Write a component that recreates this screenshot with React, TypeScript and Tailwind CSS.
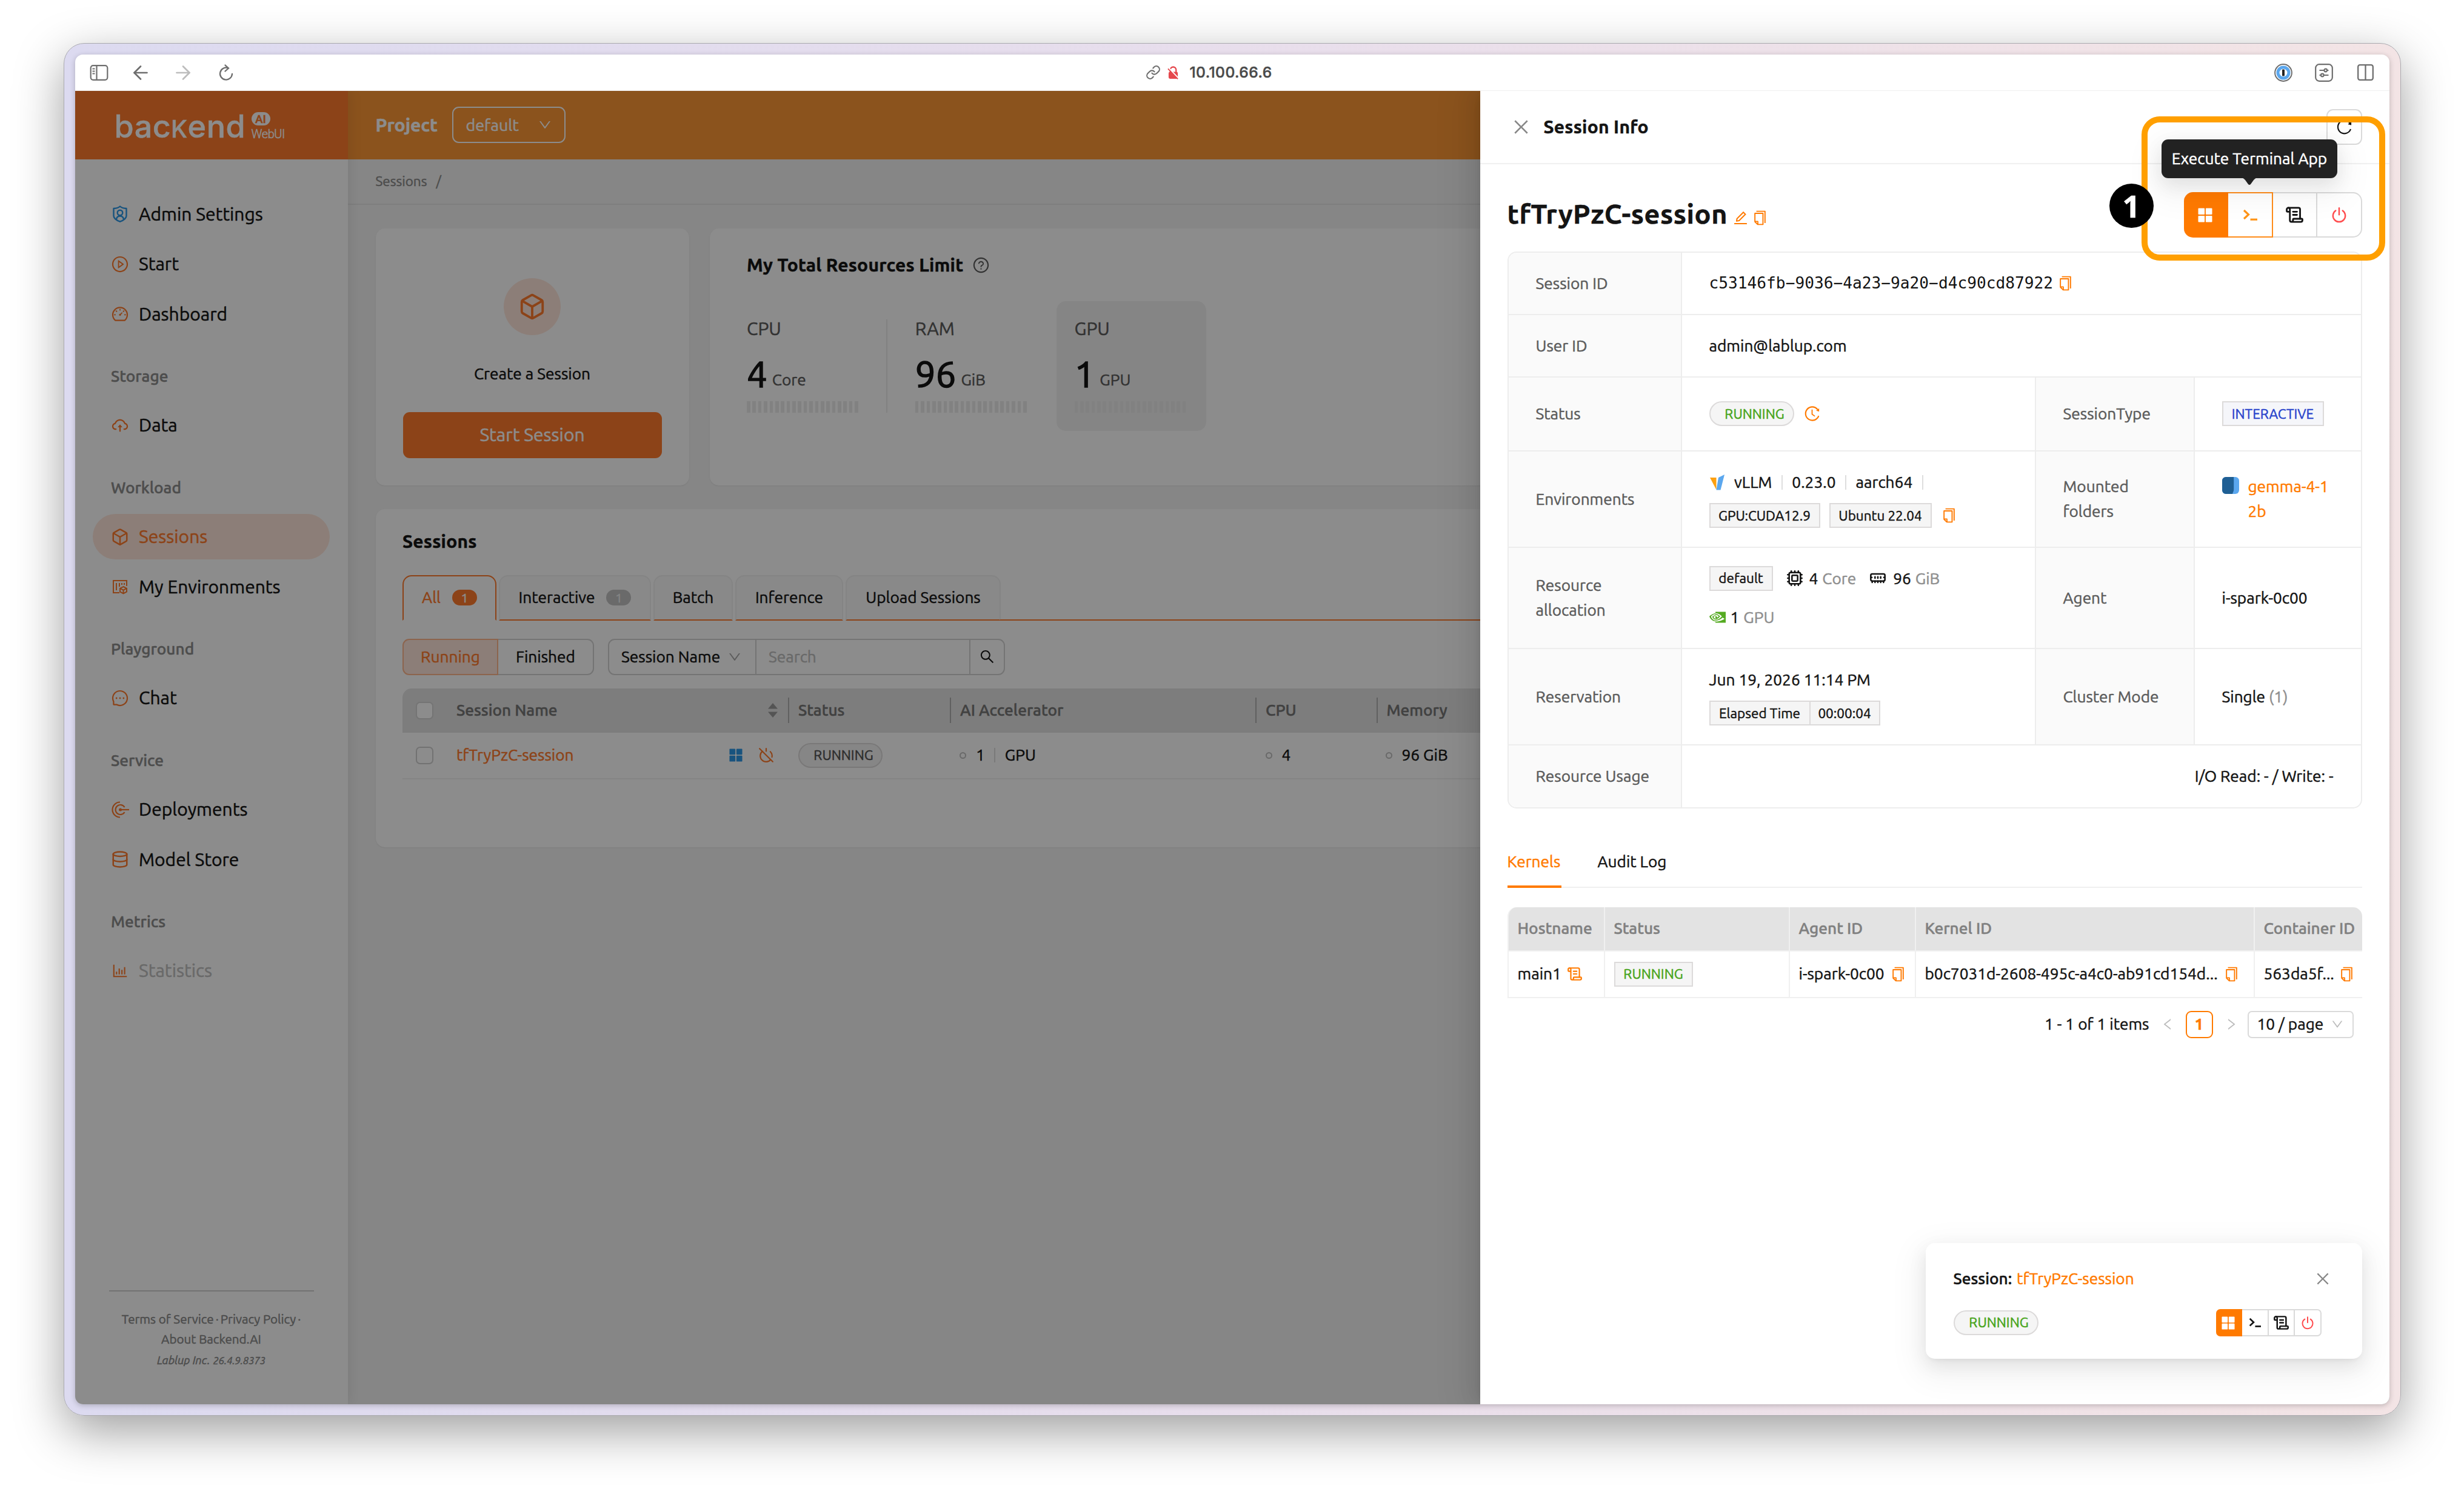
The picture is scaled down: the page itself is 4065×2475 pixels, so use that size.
import type { ReactNode } from "react"
import clsx from "clsx"
import {
  AiOutlineBarChart,
  AiOutlineClose,
  AiOutlineCloudUpload,
  AiOutlineCopy,
  AiOutlineDashboard,
  AiOutlineDown,
  AiOutlineEdit,
  AiOutlineHistory,
  AiOutlineLeft,
  AiOutlineMessage,
  AiOutlinePlayCircle,
  AiOutlineQuestionCircle,
  AiOutlineReload,
  AiOutlineRight,
  AiOutlineSearch,
} from "react-icons/ai"
import { SiNvidia } from "react-icons/si"
import { ArrowLeft, ArrowRight, Box, Cpu, Database, Link, MemoryStick, PowerOff, ScrollText } from "lucide-react"

/* ---------- icons ---------- */

function AppsIcon({ className }: { className?: string }) {
  return (
    <svg viewBox="0 0 24 24" className={className} fill="currentColor">
      <rect x="0.5" y="0.5" width="10.6" height="10.6" rx="1" />
      <rect x="12.9" y="0.5" width="10.6" height="10.6" rx="1" />
      <rect x="0.5" y="12.9" width="10.6" height="10.6" rx="1" />
      <rect x="12.9" y="12.9" width="10.6" height="10.6" rx="1" />
    </svg>
  )
}

function PowerIcon({ className }: { className?: string }) {
  return (
    <svg viewBox="0 0 24 26" className={className} fill="none" stroke="currentColor" strokeWidth="2.400" strokeLinecap="round">
      <path d="M6.300 5.400a10.200 10.200 0 1 0 11.400 0" />
      <path d="M12 1.200v11" />
    </svg>
  )
}

function TerminalIcon({ className }: { className?: string }) {
  return (
    <svg viewBox="0 0 24 20" className={className} fill="none" stroke="currentColor" strokeWidth="3.2">
      <path d="M2 2l7.5 7L2 16" />
      <path d="M12.5 17.2H24" />
    </svg>
  )
}

function ShieldUserIcon({ className }: { className?: string }) {
  return (
    <svg viewBox="0 0 24 28" className={className} fill="none" stroke="currentColor" strokeWidth="2.4" strokeLinejoin="round">
      <path d="M12 1.5C14 3.4 18 4.8 22.5 5v12c0 4-4.500 7.500-10.500 9.700C6 24.500 1.500 21 1.500 17V5C6 4.800 10 3.400 12 1.500z" />
      <circle cx="12" cy="12" r="4.300" />
      <path d="M6 23c.5-4 3-5.500 6-5.500s5.500 1.500 6 5.500" />
    </svg>
  )
}

function EnvironmentIcon({ className }: { className?: string }) {
  return (
    <svg viewBox="0 0 26 26" className={className} fill="none" stroke="currentColor" strokeWidth="2">
      <path d="M12 23H2V3h22v9" />
      <path d="M7 7v12M12 7v6M16 7v3M20 7v3" />
      <path d="M18.500 13l5.500 2.800v5.700l-5.500 2.800-5.500-2.800v-5.700zM13 15.800l5.500 2.800 5.500-2.800M18.500 18.600v5.700" />
    </svg>
  )
}

function DeployIcon({ className }: { className?: string }) {
  return (
    <svg viewBox="0 0 30 28" className={className} fill="none" stroke="currentColor" strokeWidth="2.200">
      <path d="M15 1.500a12.500 12.500 0 1 0 0 25" />
      <path d="M22.500 10a8 8 0 1 0 0 8" />
      <path d="M15 14h15" />
      <circle cx="15.500" cy="14" r="2.500" fill="currentColor" stroke="none" />
    </svg>
  )
}

function VllmIcon({ className }: { className?: string }) {
  return (
    <svg viewBox="0 0 24 26" className={className}>
      <path d="M0 5h10.500v20z" fill="#fda010" />
      <path d="M10.500 25.500L14 5l10-5-6.500 25.500z" fill="#5ba7ee" />
    </svg>
  )
}

function SidebarToggleIcon({ className }: { className?: string }) {
  return (
    <svg viewBox="0 0 30 26" className={className} fill="none" stroke="currentColor" strokeWidth="2.200">
      <rect x="1.200" y="1.200" width="27.600" height="23.600" rx="4" />
      <path d="M11 1v24M4 6.500h4M4 10.500h4M4 14.500h4" />
    </svg>
  )
}

function BrowserReloadIcon({ className }: { className?: string }) {
  return (
    <svg viewBox="0 0 24 28" className={className} fill="none" stroke="currentColor" strokeWidth="2.300" strokeLinecap="round">
      <path d="M22 16a10 10 0 1 1-7-10" />
      <path d="M10.500 1.500l5.500 5-5.500 5" />
    </svg>
  )
}

function LockOffIcon({ className }: { className?: string }) {
  return (
    <svg viewBox="0 0 20 24" className={className}>
      <path d="M5 11V7a5 5 0 0 1 10 0v4" fill="none" stroke="#e5484d" strokeWidth="2.400" />
      <rect x="2" y="10.500" width="16" height="12" rx="2.500" fill="#e5484d" />
      <path d="M1 3l18 19" stroke="#fff" strokeWidth="3" />
      <path d="M1 5l17 18" stroke="#e5484d" strokeWidth="2" />
    </svg>
  )
}

function SettingsIcon({ className }: { className?: string }) {
  return (
    <svg viewBox="0 0 30 30" className={className} fill="none" stroke="currentColor" strokeWidth="2.200">
      <rect x="1.200" y="1.200" width="27.600" height="27.600" rx="6" />
      <path d="M7.500 11h8M20 11h2.500M7.500 19h2.500M15 19h7.500" />
      <circle cx="17.700" cy="11" r="2.300" />
      <circle cx="12.300" cy="19" r="2.300" />
    </svg>
  )
}

function PasswordIcon({ className }: { className?: string }) {
  return (
    <svg viewBox="0 0 30 30" className={className}>
      <circle cx="15" cy="15" r="13.900" fill="#fff" stroke="#6e6e6e" strokeWidth="2" />
      <circle cx="15" cy="15" r="9" fill="#fff" stroke="#5ba7ee" strokeWidth="5" />
      <rect x="13" y="9.500" width="4" height="11" rx="1" fill="#222" />
    </svg>
  )
}

function SplitIcon({ className }: { className?: string }) {
  return (
    <svg viewBox="0 0 27 27" className={className} fill="none" stroke="currentColor" strokeWidth="2.300">
      <rect x="1.200" y="1.200" width="24.600" height="24.600" rx="3" />
      <path d="M13.500 1v25" />
    </svg>
  )
}

function VolumeIcon({ className }: { className?: string }) {
  return (
    <svg viewBox="0 0 27 27" className={className}>
      <rect width="27" height="27" rx="6" fill="#5ba7ee" />
      <path d="M6 0h12.500v20c0 3-2 5-2 7H6a6 6 0 0 1-6-6V6a6 6 0 0 1 6-6z" fill="#1f5f94" />
    </svg>
  )
}

/* ---------- small pieces ---------- */

function Tag({ children, className }: { children: ReactNode; className?: string }) {
  return (
    <span
      className={clsx(
        "flex h-[41px] items-center justify-center border-2 border-[#dcdada] bg-[#f5f5f5] text-[22.500px] leading-none",
        className,
      )}
    >
      {children}
    </span>
  )
}

function RunningTag({ className }: { className?: string }) {
  return (
    <Tag className={clsx("w-[140px] rounded-full border-[#b7e59a] pl-[10px] text-[#49a51d]", className)}>RUNNING</Tag>
  )
}

function CopyIcon({ className }: { className?: string }) {
  return <AiOutlineCopy className={clsx("size-[27px] shrink-0 text-[#ff7a00]", className)} />
}

function Rule() {
  return <span className="h-[24px] w-[2px] shrink-0 bg-[#dedede]" />
}

/* ---------- sidebar ---------- */

const menu = [
  {
    items: [
      { label: "Admin Settings", icon: <ShieldUserIcon className="h-[28px] w-[24px] text-[#2d97e5]" /> },
      { label: "Start", icon: <AiOutlinePlayCircle className="size-[32px]" /> },
      { label: "Dashboard", icon: <AiOutlineDashboard className="size-[32px]" /> },
    ],
  },
  { title: "Storage", items: [{ label: "Data", icon: <AiOutlineCloudUpload className="size-[32px]" /> }] },
  {
    title: "Workload",
    items: [
      { label: "Sessions", icon: <Box className="size-[30px]" />, active: true },
      { label: "My Environments", icon: <EnvironmentIcon className="size-[26px]" /> },
    ],
  },
  { title: "Playground", items: [{ label: "Chat", icon: <AiOutlineMessage className="size-[32px]" /> }] },
  {
    title: "Service",
    items: [
      { label: "Deployments", icon: <DeployIcon className="h-[28px] w-[30px]" /> },
      { label: "Model Store", icon: <Database className="size-[30px]" /> },
    ],
  },
  { title: "Metrics", items: [{ label: "Statistics", icon: <AiOutlineBarChart className="size-[30px]" />, disabled: true }] },
] as { title?: string; items: { label: string; icon: ReactNode; active?: boolean; disabled?: boolean }[] }[]

function Sidebar() {
  return (
    <aside className="relative flex w-[450px] shrink-0 flex-col bg-white shadow-[4px_0_20px_rgba(0,0,0,0.08)]">
      <div className="flex h-[112.5px] shrink-0 items-start bg-[#ff7a2c] pl-[65px] text-white">
        <span className="mt-[28px] w-[219px] font-['Inter',sans-serif] text-[52px] leading-[62px] font-medium tracking-[0.010em]">
          bac<span className="text-[39px]">K</span>end
        </span>
        <div className="mt-[35px] ml-[7px] flex flex-col items-start">
          <span className="flex h-[22px] w-[31px] items-center justify-center rounded-full bg-white font-['Roboto',sans-serif] text-[19px] leading-none font-medium text-[#ff7a2c]">
            AI
          </span>
          <span className="mt-[2px] font-['Roboto',sans-serif] text-[20px] leading-[24px] font-light tracking-[-0.02em]">WebUI</span>
        </div>
      </div>

      <nav className="px-[29.5px] pt-[53px]">
        {menu.map((group, i) => (
          <div key={i}>
            {group.title && (
              <div className="h-[101.25px] px-[30px] pt-[37px] leading-[41px] font-medium text-[#8c8c8c]">{group.title}</div>
            )}
            {group.items.map((item) => (
              <div
                key={item.label}
                className={clsx(
                  "mb-[7.5px] flex h-[75px] items-center gap-[16px] rounded-full px-[30px] text-[30px]",
                  item.active && "bg-[#ffe6da] text-[#ff7a2c]",
                  item.disabled && "text-[#bfbfbf]",
                )}
              >
                <span className="flex w-[30px] shrink-0 items-center justify-center text-[#ff7a2c]">{item.icon}</span>
                <span className="whitespace-nowrap">{item.label}</span>
              </div>
            ))}
          </div>
        ))}
      </nav>

      <footer className="mx-[56px] mt-auto h-[188px] border-t-2 border-[#d0d0d0] pt-[30px] text-center text-[20.600px] leading-[32.5px] whitespace-nowrap text-[#8c8c8c]">
        <div>Terms of Service<span className="mx-[3px]">·</span>Privacy Policy<span className="ml-[3px]">·</span></div>
        <div>About Backend.AI</div>
        <div className="pt-[2px] italic">
          <span className="text-[18.750px]">Lablup Inc.</span> <span className="text-[16.400px]">26.4.9.8373</span>
        </div>
      </footer>
    </aside>
  )
}

/* ---------- page behind the drawer ---------- */

function ResourceStat({ label, value, unit, className }: { label: string; value: string; unit: string; className?: string }) {
  return (
    <div className={clsx("flex h-[214px] flex-col px-[30px] pt-[25px]", className)}>
      <span className="text-[30px] leading-[41px] text-[#5c5c5c]">{label}</span>
      <div className="mt-[18px] flex h-[72px] items-end gap-[8px]">
        <span className="text-[60px] leading-[72px] [-webkit-text-stroke:1.600px]">{value}</span>
        <span className="leading-[53px] text-[#5c5c5c]">{unit}</span>
      </div>
      <div className="mt-[9px] flex gap-[3.75px]">
        {Array.from({ length: 20 }, (_, i) => (
          <span key={i} className="h-[19px] w-[5.625px] shrink-0 bg-[#ebebeb]" />
        ))}
      </div>
    </div>
  )
}

const tabs = [
  { label: "All", count: 1, width: "w-[155px]", active: true },
  { label: "Interactive", count: 1, width: "w-[251px]" },
  { label: "Batch", width: "w-[131px]" },
  { label: "Inference", width: "w-[178px]" },
  { label: "Upload Sessions", width: "w-[256px]" },
] as { label: string; count?: number; width: string; active?: boolean }[]

function HeadCell({ children, className }: { children: ReactNode; className?: string }) {
  return (
    <div className={clsx("flex items-center", className)}>
      <span className="mr-[15px] h-[42px] w-[2px] shrink-0 bg-[#b0b0b0]" />
      {children}
    </div>
  )
}

function Dot() {
  return <span className="h-[11px] w-[11px] shrink-0 rounded-full border-2 border-[#bfbfbf]" />
}

function SessionsCard() {
  return (
    <section className="mt-[39px] h-[558px] rounded-[15px] bg-white px-[44.5px] pt-[33px] shadow-[0_1px_3px_rgba(0,0,0,0.08)]">
      <h2 className="text-[30px] leading-[41px] font-bold tracking-[0.008em]">Sessions</h2>

      <div className="mt-[35px] flex">
        <div className="flex gap-[4px]">
          {tabs.map((tab) => (
            <div
              key={tab.label}
              className={clsx(
                "flex h-[75px] shrink-0 items-center justify-center gap-[19px] rounded-t-[15px] border-2 whitespace-nowrap",
                tab.width,
                tab.active
                  ? "border-[#ff7a2c] border-b-white bg-white text-[#ff7a2c]"
                  : "border-[#f0f0f0] border-b-[#ff7a2c] bg-[#fafafa]",
              )}
            >
              {tab.label}
              {tab.count && (
                <span
                  className={clsx(
                    "flex h-[26px] w-[41px] items-center justify-center rounded-full text-[21px] leading-none",
                    tab.active ? "bg-[#ff7a2c] text-white" : "bg-[#c1c1c1] text-[#f0f0f0]",
                  )}
                >
                  {tab.count}
                </span>
              )}
            </div>
          ))}
        </div>
        <div className="-ml-px h-[75px] flex-1 border-b-2 border-[#ff7a2c]" />
      </div>

      <div className="mt-[30px] flex h-[60px] gap-[23px]">
        <div className="flex">
          <span className="flex w-[158px] items-center justify-center rounded-l-[11px] border-2 border-[#ffb68c] bg-[#ffe6da] text-[#ff7a2c]">
            Running
          </span>
          <span className="flex w-[158px] items-center justify-center rounded-r-[11px] border-2 border-l-0 border-[#d4d4d4]">
            Finished
          </span>
        </div>
        <div className="flex rounded-[11px] border-2 border-[#d4d4d4]">
          <span className="flex w-[243px] items-center gap-[12px] border-r-2 border-[#d4d4d4] pl-[20px] whitespace-nowrap">
            Session Name
            <AiOutlineDown className="size-[24px] text-[#a8a8a8]" />
          </span>
          <span className="flex w-[353px] items-center border-r-2 border-[#d4d4d4] pl-[20px] text-[#bfbfbf]">Search</span>
          <span className="flex w-[55px] items-center justify-center">
            <AiOutlineSearch className="size-[27px]" />
          </span>
        </div>
      </div>

      <div className="mt-[22px] flex h-[73px] items-center rounded-t-[15px] bg-[#e3e3e3] font-medium whitespace-nowrap text-[#777]">
        <span className="ml-[22px] size-[29px] shrink-0 rounded-[7px] border-2 border-[#d4d4d4] bg-white" />
        <div className="flex w-[585px] shrink-0 items-center pl-[38px]">
          Session Name
          <svg viewBox="0 0 16 24" className="ml-auto h-[24px] w-[16px]" fill="#9a9a9a">
            <path d="M0 9.500L8 0l8 9.500zM0 14.500L8 24l8-9.500z" />
          </svg>
          <span className="w-[17px]" />
        </div>
        <HeadCell className="w-[267px]">Status</HeadCell>
        <HeadCell className="w-[504px]">AI Accelerator</HeadCell>
        <HeadCell className="w-[199.500px]">CPU</HeadCell>
        <HeadCell>Memory</HeadCell>
      </div>
      <div className="flex h-[77px] items-center border-b-2 border-[#f0f0f0] whitespace-nowrap">
        <span className="ml-[22px] size-[29px] shrink-0 rounded-[7px] border-2 border-[#d0d0d0] bg-white" />
        <div className="flex w-[602px] shrink-0 items-center pl-[38px] text-[#ff7a2c]">
          tfTryPzC-session
          <AppsIcon className="ml-auto size-[22px] text-[#2d97e5]" />
          <PowerOff className="mr-[40px] ml-[26px] size-[26px]" />
        </div>
        <div className="w-[266px]">
          <Tag className="w-[139px] rounded-full border-[#b0b3ae] pl-[10px] text-[#555]">RUNNING</Tag>
        </div>
        <div className="flex w-[504.500px] items-center">
          <Dot />
          <span className="ml-[16px]">1</span>
          <span className="mr-[16px] ml-[15px] flex"><Rule /></span>
          GPU
        </div>
        <div className="flex w-[198px] items-center gap-[16px]"><Dot />4</div>
        <div className="flex items-center gap-[16px]"><Dot />96 GiB</div>
      </div>
    </section>
  )
}

function Page() {
  return (
    <main className="flex flex-1 flex-col bg-[#f5f5f5]">
      <header className="flex h-[112.5px] shrink-0 items-center bg-[#fd9735] pl-[46px] text-white">
        <span className="w-[126px] text-[30px] font-bold">Project</span>
        <span className="flex h-[60px] w-[187px] items-center rounded-[11px] border-2 border-white pl-[21px] text-[26.800px]">
          default
          <AiOutlineDown className="mr-[20px] ml-auto size-[24px]" />
        </span>
      </header>
      <div className="flex h-[75px] shrink-0 items-center gap-[15px] border-b-2 border-[#e6e6e6] pl-[46px] text-[22.500px] text-[#8c8c8c]">
        Sessions <span>/</span>
      </div>

      <div className="px-[46px] pt-[39px]">
        <div className="flex gap-[34.500px]">
          <section className="flex h-[424px] w-[517px] shrink-0 flex-col items-center rounded-[15px] bg-white shadow-[0_1px_3px_rgba(0,0,0,0.08)]">
            <span className="mt-[82px] flex size-[94px] items-center justify-center rounded-full bg-[#ffe6da]">
              <Box className="size-[46px] text-[#ff7a2c]" />
            </span>
            <span className="mt-[43px] leading-[41px]">Create a Session</span>
            <span className="mt-[43px] flex h-[76px] w-[427px] items-center justify-center rounded-[11px] bg-[#ff7a2c] text-[30px] text-white">
              Start Session
            </span>
          </section>
          <section className="h-[424px] flex-1 rounded-[15px] bg-white pt-[40px] pl-[31px] shadow-[0_1px_3px_rgba(0,0,0,0.08)]">
            <div className="flex items-center gap-[15px] pl-[30px] text-[30px] leading-[41px] font-bold tracking-[0.008em]">
              My Total Resources Limit
              <AiOutlineQuestionCircle className="size-[29px] text-[#5c5c5c]" />
            </div>
            <div className="mt-[39px] flex">
              <ResourceStat label="CPU" value="4" unit="Core" />
              <span className="mt-[30px] mr-[16px] ml-[16px] h-[154px] w-[2px] bg-[#ebebeb]" />
              <ResourceStat label="RAM" value="96" unit="GiB" />
              <ResourceStat label="GPU" value="1" unit="GPU" className="ml-[19px] w-[247px] rounded-[15px] bg-[#f3f3f3]" />
            </div>
          </section>
        </div>
        <SessionsCard />
      </div>
    </main>
  )
}

/* ---------- drawer ---------- */

function Label({ children }: { children: ReactNode }) {
  return (
    <div className="flex items-center border-r-2 border-[#ededed] bg-[#fafafa] pl-[45px] leading-[41px] text-[#5c5c5c]">
      {children}
    </div>
  )
}

function Value({ children, className }: { children: ReactNode; className?: string }) {
  return <div className={clsx("flex border-[#ededed] px-[45px]", className)}>{children}</div>
}

const wideRow = "grid grid-cols-[286px_1fr] border-b-2 border-[#ededed]"
const splitRow = "grid grid-cols-[286px_584px_262px_1fr] border-b-2 border-[#ededed]"

function Descriptions() {
  return (
    <div className="mt-[23px] overflow-hidden rounded-[15px] border-2 border-[#ededed] whitespace-nowrap">
      <div className={clsx(wideRow, "h-[102.500px]")}>
        <Label>Session ID</Label>
        <Value className="items-center">
          <span className="font-['DejaVu_Sans_Mono',monospace] text-[26.200px] [-webkit-text-stroke:0]">
            c53146fb−9036−4a23−9a20−d4c90cd87922
          </span>
          <CopyIcon className="ml-[7px]" />
        </Value>
      </div>
      <div className={clsx(wideRow, "h-[103.500px]")}>
        <Label>User ID</Label>
        <Value className="items-center">admin@lablup.com</Value>
      </div>
      <div className={clsx(splitRow, "h-[121.500px]")}>
        <Label>Status</Label>
        <Value className="items-center gap-[15px] border-r-2">
          <RunningTag />
          <AiOutlineHistory className="size-[29px] text-[#ff7a00]" />
        </Value>
        <Label>SessionType</Label>
        <Value className="items-center">
          <Tag className="w-[168px] border-[#c9c8e6] bg-[#f5f6fa] text-[#2a45cc]">INTERACTIVE</Tag>
        </Value>
      </div>
      <div className={clsx(splitRow, "h-[159.500px]")}>
        <Label>Environments</Label>
        <Value className="flex-col justify-center border-r-2">
          <div className="flex h-[41px] items-center gap-[15.500px]">
            <VllmIcon className="h-[26px] w-[26px]" />
            <span>vLLM</span>
            <Rule />
            <span>0.23.0</span>
            <Rule />
            <span>aarch64</span>
            <Rule />
          </div>
          <div className="mt-[14px] flex items-center gap-[15px]">
            <Tag className="w-[183px]">GPU:CUDA12.9</Tag>
            <Tag className="w-[169px]">Ubuntu 22.04</Tag>
            <CopyIcon />
          </div>
        </Value>
        <Label>
          Mounted
          <br />
          folders
        </Label>
        <Value className="items-center gap-[15px]">
          <VolumeIcon className="mb-[44px] size-[28px] shrink-0" />
          <span className="leading-[41px] text-[#ff7a00]">
            gemma-4-1
            <br />
            2b
          </span>
        </Value>
      </div>
      <div className={clsx(splitRow, "h-[166.500px]")}>
        <Label>
          Resource
          <br />
          allocation
        </Label>
        <Value className="flex-col justify-center border-r-2">
          <div className="flex items-center">
            <Tag className="w-[105px]">default</Tag>
            <Cpu className="ml-[22px] size-[28px]" strokeWidth={2.2} />
            <span className="ml-[10px]">4</span>
            <span className="ml-[7px] text-[#8f8f8f]">Core</span>
            <MemoryStick className="ml-[22px] size-[28px]" strokeWidth={2.2} />
            <span className="ml-[11px]">96</span>
            <span className="ml-[7px] text-[#8f8f8f]">GiB</span>
          </div>
          <div className="mt-[23px] flex h-[41px] items-center">
            <SiNvidia className="size-[27px] text-[#55ab22]" />
            <span className="ml-[8px]">1</span>
            <span className="ml-[7px] text-[#8f8f8f]">GPU</span>
          </div>
        </Value>
        <Label>Agent</Label>
        <Value className="items-center">i-spark-0c00</Value>
      </div>
      <div className={clsx(splitRow, "h-[159.500px]")}>
        <Label>Reservation</Label>
        <Value className="flex-col justify-center border-r-2">
          <span className="leading-[41px]">Jun 19, 2026 11:14 PM</span>
          <div className="mt-[14px] flex">
            <Tag className="w-[167px]">Elapsed Time</Tag>
            <Tag className="w-[115px] border-l-0">00:00:04</Tag>
          </div>
        </Value>
        <Label>Cluster Mode</Label>
        <Value className="items-center gap-[6px]">
          Single <span className="text-[#8f8f8f]">(1)</span>
        </Value>
      </div>
      <div className="grid h-[101.500px] grid-cols-[286px_1fr]">
        <Label>Resource Usage</Label>
        <Value className="items-center justify-end">I/O Read: - / Write: -</Value>
      </div>
    </div>
  )
}

const kernelCols = "grid grid-cols-[159px_305px_208px_559px_1fr]"

function KernelsTable() {
  return (
    <div className="mt-[32px] overflow-hidden rounded-t-[15px] border-b-2 border-l-2 border-[#f0f0f0] whitespace-nowrap">
      <div className={clsx(kernelCols, "h-[73px] border-b-2 border-[#f0f0f0] bg-[#e3e3e3] font-medium text-[#808080] [&>span]:flex [&>span]:items-center [&>span]:border-r-2 [&>span]:border-[#f0f0f0] [&>span]:pl-[15px]")}>
        <span>Hostname</span>
        <span>Status</span>
        <span>Agent ID</span>
        <span>Kernel ID</span>
        <span className="border-r-0!">Container ID</span>
      </div>
      <div className={clsx(kernelCols, "h-[75px] [&>div]:flex [&>div]:items-center [&>div]:border-r-2 [&>div]:border-[#f0f0f0] [&>div]:pl-[15px]")}>
        <div>
          main1
          <ScrollText className="ml-[9px] size-[26px] text-[#ff7a00]" />
        </div>
        <div>
          <Tag className="w-[130px] border-[#b7e59a] text-[#49a51d]">RUNNING</Tag>
        </div>
        <div>
          <span className="w-[143px]">i-spark-0c00</span>
          <CopyIcon className="ml-[7px]" />
        </div>
        <div>
          <span className="w-[485px]">b0c7031d-2608-495c-a4c0-ab91cd154d...</span>
          <CopyIcon className="ml-[7px]" />
        </div>
        <div className="border-r-0!">
          <span className="w-[116px]">563da5f...</span>
          <CopyIcon className="ml-[7px]" />
        </div>
      </div>
    </div>
  )
}

function ActionGroup() {
  return (
    <div className="flex h-[75px] [&>span]:flex [&>span]:w-[73.500px] [&>span]:items-center [&>span]:justify-center [&>span]:border-y-2 [&>span]:border-r-2 [&>span]:border-[#dadada]">
      <span className="rounded-l-[15px] border-[#ff7a00]! bg-[#ff7a00] text-white">
        <AppsIcon className="size-[24px]" />
      </span>
      <span className="border-[#ff8c1a]! text-[#ff9417]">
        <TerminalIcon className="h-[20px] w-[24px]" />
      </span>
      <span>
        <ScrollText className="size-[31px]" strokeWidth={2.2} />
      </span>
      <span className="rounded-r-[15px] text-[#ff4d4f]">
        <PowerIcon className="h-[26px] w-[24px]" />
      </span>
    </div>
  )
}

function Notification() {
  return (
    <div className="absolute top-[1901px] right-[45px] h-[191px] w-[720px] rounded-[15px] bg-white pt-[38px] pl-[46px] shadow-[0_11px_30px_rgba(0,0,0,0.08),0_5px_11px_-7px_rgba(0,0,0,0.12),0_17px_52px_15px_rgba(0,0,0,0.05)]">
      <div className="flex h-[41px] items-center gap-[8px] pr-[51px]">
        <span className="font-medium">Session:</span>
        <span className="text-[#ff7a00]">tfTryPzC-session</span>
        <AiOutlineClose className="ml-auto size-[28px] text-[#888]" />
      </div>
      <div className="mt-[30px] flex items-center justify-between pr-[67px]">
        <RunningTag />
        <div className="flex h-[45px] [&>span]:flex [&>span]:w-[43.500px] [&>span]:items-center [&>span]:justify-center [&>span]:border-y-2 [&>span]:border-r-2 [&>span]:border-[#dadada]">
          <span className="rounded-l-[7px] border-[#ff7a00]! bg-[#ff7a00] text-white">
            <AppsIcon className="size-[22px]" />
          </span>
          <span>
            <TerminalIcon className="h-[17px] w-[20px]" />
          </span>
          <span>
            <ScrollText className="size-[27px]" strokeWidth={2.2} />
          </span>
          <span className="rounded-r-[7px] text-[#ff4d4f]">
            <PowerIcon className="h-[22px] w-[20px]" />
          </span>
        </div>
      </div>
    </div>
  )
}

function Drawer() {
  return (
    <div className="absolute inset-y-0 right-0 w-[1500px] bg-white shadow-[-11px_0_30px_rgba(0,0,0,0.08),-5px_0_11px_-7px_rgba(0,0,0,0.12),-17px_0_52px_15px_rgba(0,0,0,0.05)]">
      <div className="flex h-[121px] items-center border-b-2 border-[#f0f0f0] pr-[45px] pl-[51px]">
        <AiOutlineClose className="size-[33px] text-[#888]" />
        <span className="ml-[21px] text-[30px] font-bold tracking-[0.008em]">Session Info</span>
        <span className="ml-auto flex size-[59px] items-center justify-center rounded-[11px] border-2 border-[#dadada]">
          <AiOutlineReload className="size-[29px]" />
        </span>
      </div>

      <div className="px-[45px] pt-[46px]">
        <div className="flex h-[75px] items-center">
          <h1 className="mb-[3px] text-[45px] leading-[60px] font-bold tracking-[0.012em]">tfTryPzC-session</h1>
          <AiOutlineEdit className="mt-[10px] ml-[8px] size-[27px] text-[#ff7a00]" />
          <CopyIcon className="mt-[10px] ml-[5px]" />
          <div className="ml-auto">
            <ActionGroup />
          </div>
        </div>

        <Descriptions />

        <div className="mt-[45px] flex h-[86px] gap-[60px] border-b-2 border-[#f0f0f0] leading-[85px]">
          <span className="h-[86px] w-[89px] border-b-4 border-[#ff7a00] text-[#ff7a00]">Kernels</span>
          <span>Audit Log</span>
        </div>

        <KernelsTable />

        <div className="mt-[21px] flex h-[45px] items-center justify-end pr-[14px]">
          <span>1 - 1 of 1 items</span>
          <AiOutlineLeft className="ml-[18px] size-[24px] text-[#bcbcbc]" />
          <span className="ml-[18px] flex size-[45px] items-center justify-center rounded-[9px] border-2 border-[#ff7a00] font-semibold text-[#ff7a00]">
            1
          </span>
          <AiOutlineRight className="ml-[18px] size-[24px] text-[#bcbcbc]" />
          <span className="ml-[15px] flex h-[45px] w-[175px] items-center rounded-[7px] border-2 border-[#dadada] pl-[14px]">
            10 / page
            <AiOutlineDown className="mr-[14px] ml-auto size-[22px] text-[#bcbcbc]" />
          </span>
        </div>
      </div>

      <Notification />

      {/* Tooltip */}
      <div className="absolute top-[80px] left-[1124.500px] flex h-[64px] w-[290px] items-center justify-center rounded-[11px] bg-[#222] text-white shadow-[0_11px_30px_rgba(0,0,0,0.08),0_17px_52px_15px_rgba(0,0,0,0.05)]">
        Execute Terminal App
        <svg viewBox="0 0 30 13" className="absolute top-[63px] left-[130px] h-[13px] w-[30px]" fill="#222">
          <path d="M0 0h30c-4 0-6 2-8 4l-5 7q-2 2-4 0L8 4C6 2 4 0 0 0z" />
        </svg>
      </div>

      {/* Step callout */}
      <div className="absolute top-[42px] left-[1091.500px] h-[238px] w-[402px] rounded-[30px] border-[10px] border-[#ff9f00]" />
      <div className="absolute top-[153px] left-[1038px] flex size-[73px] items-center justify-center rounded-full bg-black font-['Noto_Sans',sans-serif] text-[51px] leading-none font-bold text-white">
        1
      </div>
    </div>
  )
}

function BrowserBar() {
  return (
    <div className="grid h-[60px] shrink-0 grid-cols-3 items-center border-b border-[#efefef] bg-white text-[#6e6e6e]">
      <div className="flex items-center pl-[24px]">
        <SidebarToggleIcon className="h-[26px] w-[31px]" />
        <ArrowLeft className="ml-[35px] size-[36px]" strokeWidth={1.8} />
        <ArrowRight className="ml-[34px] size-[36px] text-[#bdbdbd]" strokeWidth={1.8} />
        <BrowserReloadIcon className="ml-[41px] h-[28px] w-[24px]" />
      </div>
      <div className="flex items-center justify-center pr-[76px]">
        <Link className="size-[25px]" />
        <LockOffIcon className="ml-[11px] h-[24px] w-[19px]" />
        <span className="ml-[17px] font-['Inter',sans-serif] text-[24.500px] font-medium tracking-[0.02em] text-[#4a4a4a]">10.100.66.6</span>
      </div>
      <div className="flex items-center justify-end pr-[25px]">
        <PasswordIcon className="size-[30px]" />
        <SettingsIcon className="ml-[37px] size-[30px]" />
        <SplitIcon className="ml-[40px] size-[27px]" />
      </div>
    </div>
  )
}

export default function App() {
  return (
    <div className="h-[2475px] w-[4065px] overflow-hidden bg-white pt-[71px] pl-[104.500px] font-['Ubuntu','Noto_Sans',sans-serif] text-[26.250px] text-[#141414] [-webkit-text-stroke:0.5px]">
      <div className="h-[2265px] w-[3856px] rounded-[34px] border border-[#a9a9ae] bg-linear-to-r from-[#dcdaf0] via-[#e8deec] to-[#f3e4e5] p-[18px] shadow-[0_26px_80px_rgba(0,0,0,0.38)]">
        <div className="flex h-[2227px] w-[3818px] flex-col overflow-hidden rounded-[13px] shadow-[0_2px_10px_rgba(0,0,0,0.22)]">
          <BrowserBar />
          <div className="relative flex flex-1 overflow-hidden">
            <Sidebar />
            <Page />
            <div className="absolute inset-0 bg-black/45" />
            <Drawer />
          </div>
        </div>
      </div>
    </div>
  )
}
